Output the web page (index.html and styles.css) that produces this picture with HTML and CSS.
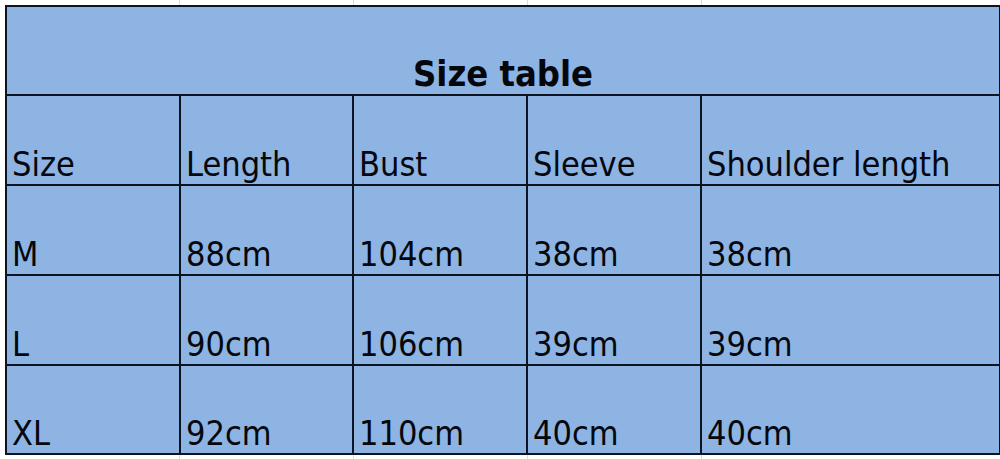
FILE: index.html
```html
<!DOCTYPE html>
<html lang="en">
<head>
<meta charset="utf-8">
<title>Size table</title>
<link rel="stylesheet" href="styles.css">
</head>
<body>
<div class="sheet">
  <table class="size-table">
    <colgroup>
      <col class="c1"><col class="c2"><col class="c3"><col class="c4"><col class="c5">
    </colgroup>
    <tr class="title-row"><th colspan="5" class="title">Size table</th></tr>
    <tr><td>Size</td><td>Length</td><td>Bust</td><td>Sleeve</td><td>Shoulder length</td></tr>
    <tr><td>M</td><td>88cm</td><td>104cm</td><td>38cm</td><td>38cm</td></tr>
    <tr><td>L</td><td>90cm</td><td>106cm</td><td>39cm</td><td>39cm</td></tr>
    <tr class="last-row"><td>XL</td><td>92cm</td><td>110cm</td><td>40cm</td><td>40cm</td></tr>
  </table>
</div>
</body>
</html>
```

FILE: styles.css
```css
html, body {
  margin: 0;
  padding: 0;
  background: #ffffff;
}

.sheet {
  width: 1000px;
  height: 459px;
  padding: 5px 0 0 5px;
  box-sizing: border-box;
  background-color: #ffffff;
  background-image:
    linear-gradient(to right, transparent 179px, #dcdcdc 179px, #dcdcdc 180px, transparent 180px,
      transparent 353px, #dcdcdc 353px, #dcdcdc 354px, transparent 354px,
      transparent 527px, #dcdcdc 527px, #dcdcdc 528px, transparent 528px,
      transparent 701px, #dcdcdc 701px, #dcdcdc 702px, transparent 702px);
}

.size-table {
  border-collapse: collapse;
  table-layout: fixed;
  width: 994px;
  background: #8db4e2;
  font-family: "DejaVu Sans", "Liberation Sans", sans-serif;
  font-stretch: condensed;
  font-size: 34px;
  color: #05070c;
}

.c1 { width: 174px; }
.c2 { width: 173px; }
.c3 { width: 174px; }
.c4 { width: 174px; }
.c5 { width: 299px; }

.size-table td,
.size-table th {
  border: 2px solid #0b1420;
  height: 87px;
  padding: 0 0 1px 5px;
  vertical-align: bottom;
  text-align: left;
  font-weight: normal;
  white-space: nowrap;
  line-height: 1.05;
}

.size-table .last-row td {
  height: 86px;
}

.size-table .title {
  height: 86px;
  text-align: center;
  font-weight: bold;
  font-size: 36px;
  padding: 0 0 1px 0;
}
```
